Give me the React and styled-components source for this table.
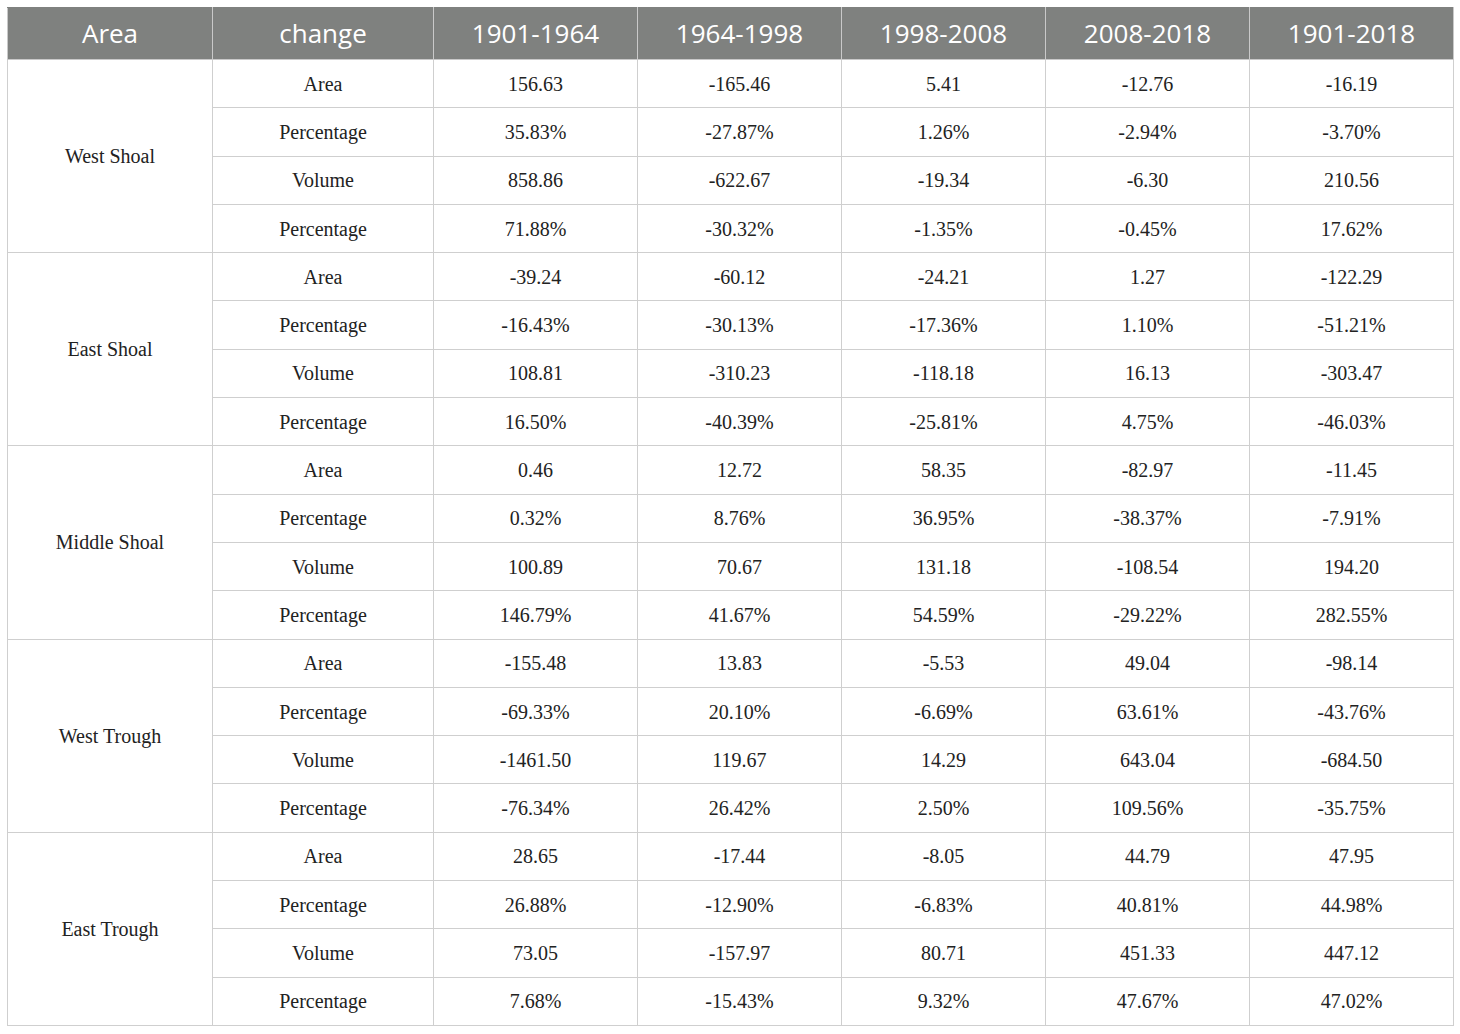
import React from "react";
import styled, { createGlobalStyle } from "styled-components";

const Global = createGlobalStyle`
  html, body { margin: 0; padding: 0; background: #fff; }
  body { padding: 7px 7px 0 7px; }
`;

const Table = styled.table`
  width: 1446px;
  table-layout: fixed;
  border-collapse: collapse;
  font-family: "Liberation Serif", "Times New Roman", serif;
  color: #222;
`;

const HeadCell = styled.th`
  height: 49px;
  padding: 0 0 2px 0;
  background: #7f817f;
  color: #fff;
  font-family: "Open Sans", "Noto Sans", sans-serif;
  font-weight: 400;
  font-size: 26px;
  line-height: 1;
  text-align: center;
  vertical-align: middle;
  border: 1px solid #c9c9c9;
  border-top-color: #7f817f;
`;

const Cell = styled.td`
  height: 47.3px;
  padding: 0;
  font-size: 20px;
  line-height: 1;
  text-align: center;
  vertical-align: middle;
  border: 1px solid #cfcfcf;
  ${(p) => (p.$group ? "border-top: 1.5px solid #bdbdbd;" : "")}
`;

const widths = [205, 221, 204, 204, 204, 204, 204];
const headers = ["Area", "change", "1901-1964", "1964-1998", "1998-2008", "2008-2018", "1901-2018"];
const labels = ["Area", "Percentage", "Volume", "Percentage"];

const data = [
  ["West Shoal", [
    ["156.63", "-165.46", "5.41", "-12.76", "-16.19"],
    ["35.83%", "-27.87%", "1.26%", "-2.94%", "-3.70%"],
    ["858.86", "-622.67", "-19.34", "-6.30", "210.56"],
    ["71.88%", "-30.32%", "-1.35%", "-0.45%", "17.62%"],
  ]],
  ["East Shoal", [
    ["-39.24", "-60.12", "-24.21", "1.27", "-122.29"],
    ["-16.43%", "-30.13%", "-17.36%", "1.10%", "-51.21%"],
    ["108.81", "-310.23", "-118.18", "16.13", "-303.47"],
    ["16.50%", "-40.39%", "-25.81%", "4.75%", "-46.03%"],
  ]],
  ["Middle Shoal", [
    ["0.46", "12.72", "58.35", "-82.97", "-11.45"],
    ["0.32%", "8.76%", "36.95%", "-38.37%", "-7.91%"],
    ["100.89", "70.67", "131.18", "-108.54", "194.20"],
    ["146.79%", "41.67%", "54.59%", "-29.22%", "282.55%"],
  ]],
  ["West Trough", [
    ["-155.48", "13.83", "-5.53", "49.04", "-98.14"],
    ["-69.33%", "20.10%", "-6.69%", "63.61%", "-43.76%"],
    ["-1461.50", "119.67", "14.29", "643.04", "-684.50"],
    ["-76.34%", "26.42%", "2.50%", "109.56%", "-35.75%"],
  ]],
  ["East Trough", [
    ["28.65", "-17.44", "-8.05", "44.79", "47.95"],
    ["26.88%", "-12.90%", "-6.83%", "40.81%", "44.98%"],
    ["73.05", "-157.97", "80.71", "451.33", "447.12"],
    ["7.68%", "-15.43%", "9.32%", "47.67%", "47.02%"],
  ]],
];

export default function App() {
  return (
    <>
      <Global />
      <Table>
        <colgroup>
          {widths.map((w, i) => (
            <col key={i} style={{ width: w }} />
          ))}
        </colgroup>
        <thead>
          <tr>
            {headers.map((h) => (
              <HeadCell key={h}>{h}</HeadCell>
            ))}
          </tr>
        </thead>
        <tbody>
          {data.map(([area, rows], gi) =>
            rows.map((vals, ri) => (
              <tr key={area + ri}>
                {ri === 0 && (
                  <Cell rowSpan={4} $group={gi > 0}>{area}</Cell>
                )}
                <Cell $group={gi > 0 && ri === 0}>{labels[ri]}</Cell>
                {vals.map((v, vi) => (
                  <Cell key={vi} $group={gi > 0 && ri === 0}>{v}</Cell>
                ))}
              </tr>
            ))
          )}
        </tbody>
      </Table>
    </>
  );
}
